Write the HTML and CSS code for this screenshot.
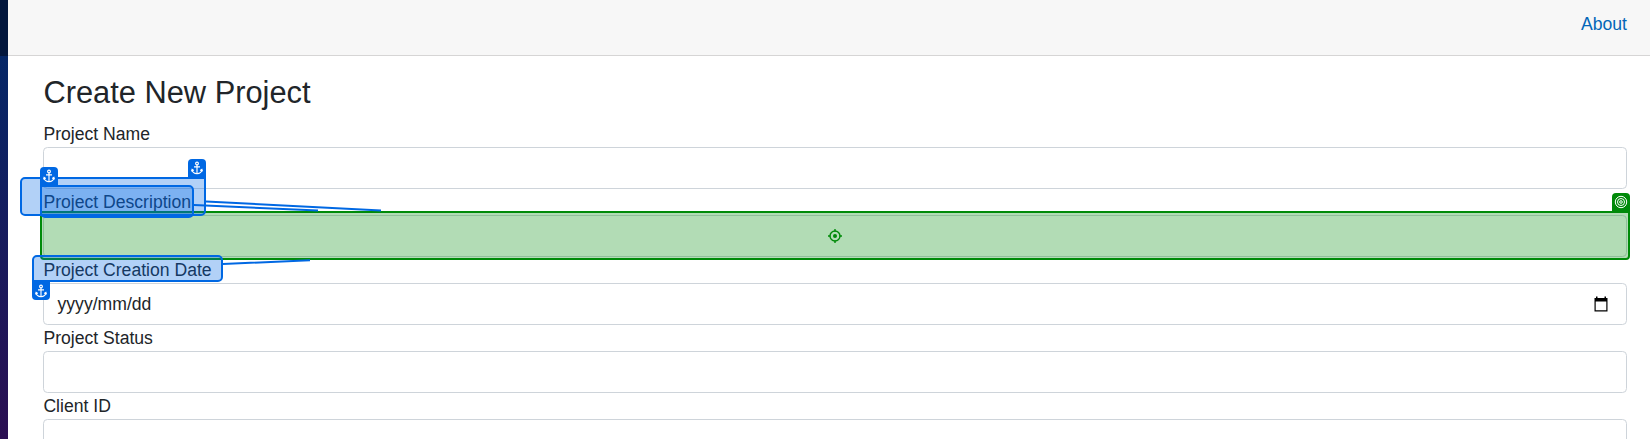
FILE: index.html
```html
<!DOCTYPE html>
<html lang="en">
<head>
<meta charset="utf-8">
<title>Create New Project</title>
<link rel="stylesheet" href="styles.css">
</head>
<body>
<svg class="defs" width="0" height="0">
  <symbol id="anchor" viewBox="0 0 18 18">
    <g fill="none" stroke="#fff" stroke-width="1.150">
      <circle cx="9" cy="4.500" r="1.400"/>
      <path d="M9 6v8.600M6 7.900h6M4 10.800c.5 2.300 2.500 3.700 5 3.900 2.500-.2 4.500-1.600 5-3.900M3.500 12.400l.6-1.900 1.700 1.100M14.500 12.400l-.6-1.900-1.700 1.100"/>
    </g>
  </symbol>
</svg>
<div class="page">
  <aside class="sidebar"><div class="brand"></div></aside>
  <main class="main">
    <header class="topbar"><a class="about">About</a></header>
    <form class="content">
      <h3 class="title">Create New Project</h3>
      <label class="label">Project Name</label>
      <div class="control"></div>
      <label class="label">Project Description</label>
      <div class="control"></div>
      <label class="label">Project Creation Date</label>
      <div class="control date"><span>yyyy/mm/dd</span>
        <svg width="16" height="16" viewBox="0 0 16 16"><path fill="#000" fill-rule="evenodd" d="M1.500 2H3V.5h1.500V2h7V.5H13V2h1.500v13.500h-13zM2.700 5.500v8.800h10.600V5.500z"/></svg>
      </div>
      <label class="label">Project Status</label>
      <div class="control"></div>
      <label class="label">Client ID</label>
      <div class="control"></div>
    </form>
  </main>
</div>
<div class="target">
  <svg width="14" height="14" viewBox="0 0 14 14"><g fill="none" stroke="#008a09" stroke-width="1.400"><circle cx="7" cy="7" r="5"/><path d="M7 0v2.500M7 11.500V14M0 7h2.500M11.500 7H14"/></g><circle cx="7" cy="7" r="2" fill="#008a09"/></svg>
</div>
<div class="tab target-tab"><svg width="18" height="18" viewBox="0 0 18 18"><g fill="none" stroke="#fff" stroke-width="1"><circle cx="9" cy="9" r="5.700"/><circle cx="9" cy="9" r="3.500"/><circle cx="9" cy="9" r="1.300"/></g></svg></div>
<svg class="links" width="1650" height="439"><path d="M206 201.500L381 210.500M194 205L318 210.500M223 264L310 260.200"/></svg>
<div class="anchor outer"></div>
<div class="anchor inner"></div>
<div class="anchor creation"></div>
<div class="tab outer-tab"><svg width="18" height="18"><use href="#anchor"/></svg></div>
<div class="tab inner-tab"><svg width="18" height="18"><use href="#anchor"/></svg></div>
<div class="tab creation-tab"><svg width="18" height="18"><use href="#anchor"/></svg></div>
</body>
</html>
```
FILE: styles.css
```css
* { box-sizing: border-box; }
body { margin: 0; height: 439px; overflow: hidden; position: relative; background: #fff; color: #212529; font: 17.600px/26.400px "Liberation Sans", Arial, sans-serif; }
svg { display: block; }
.defs { position: absolute; }
.page { display: flex; height: 439px; overflow: hidden; }
.sidebar { width: 8px; flex: none; background: linear-gradient(#052767 56px, #2b0f52 439px); }
.brand { height: 56px; background: #03173d; }
.main { flex: 1; }
.topbar { height: 56px; display: flex; justify-content: flex-end; padding: 11px 23px 0 0; background: #f7f7f7; border-bottom: 1px solid #d6d5d5; }
.about { color: #0366b8; }
.content { padding: 18px 23px 0 35px; }
.title { margin: 0 0 10px; padding-left: .5px; font-size: 30.800px; line-height: 37px; font-weight: 400; }
.label { display: block; height: 26px; padding-left: .4px; }
.control { height: 42px; border: 1px solid #ced4da; border-radius: 4.400px; background: #fff; }
.date { display: flex; align-items: center; justify-content: space-between; padding: 0 17px 0 13.500px; }
.target { position: absolute; left: 40px; top: 211px; width: 1590px; height: 49px; border: 2px solid #008a09; border-radius: 0 0 4px 4px; background: rgba(0,138,9,.3); display: flex; align-items: center; justify-content: center; }
.links { position: absolute; left: 0; top: 0; fill: none; stroke: #0068e3; stroke-width: 2; }
.anchor { position: absolute; border: 2px solid #0068e3; border-radius: 5px; background: rgba(0,104,227,.3); }
.outer { left: 20px; top: 177px; width: 186px; height: 39px; border-top-right-radius: 0; }
.inner { left: 40px; top: 185px; width: 154px; height: 33px; border-top-left-radius: 0; }
.creation { left: 32px; top: 255px; width: 191px; height: 27px; border-bottom-left-radius: 0; }
.tab { position: absolute; width: 18px; height: 19px; border-radius: 4px 4px 0 0; background: #0068e3; }
.target-tab { left: 1612px; top: 193px; background: #008a09; }
.outer-tab { left: 188px; top: 159px; }
.inner-tab { left: 40px; top: 167px; }
.creation-tab { left: 32px; top: 281px; padding-top: 1px; border-radius: 0 0 4px 4px; }
```
